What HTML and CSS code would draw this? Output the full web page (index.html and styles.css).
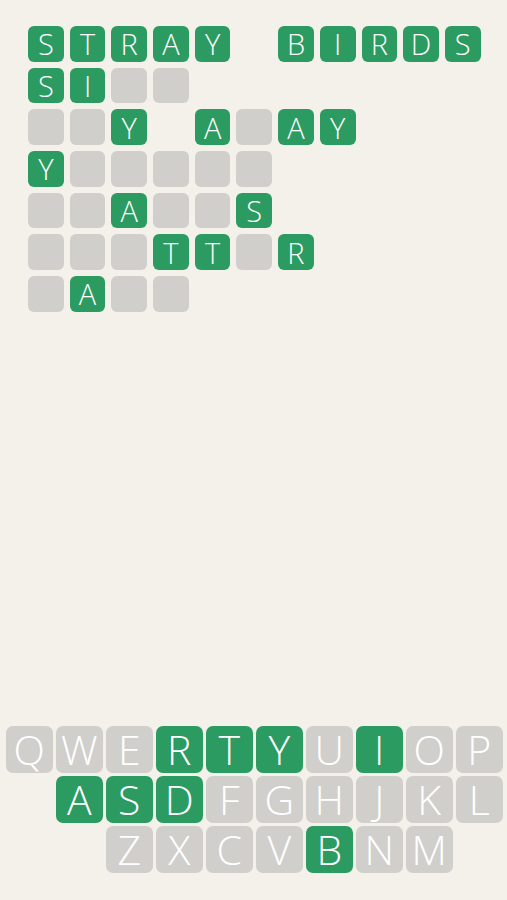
FILE: index.html
```html
<!DOCTYPE html>
<html>
<head>
<meta charset="utf-8">
<link rel="stylesheet" href="styles.css">
</head>
<body>
<div class="page">
  <div class="board">
    <div class="t g">S</div><div class="t g">T</div><div class="t g">R</div><div class="t g">A</div><div class="t g">Y</div><div class="t e"></div><div class="t g">B</div><div class="t g">I</div><div class="t g">R</div><div class="t g">D</div><div class="t g">S</div>

    <div class="t g">S</div><div class="t g">I</div><div class="t x"></div><div class="t x"></div><div class="t e"></div><div class="t e"></div><div class="t e"></div><div class="t e"></div><div class="t e"></div><div class="t e"></div><div class="t e"></div>

    <div class="t x"></div><div class="t x"></div><div class="t g">Y</div><div class="t e"></div><div class="t g">A</div><div class="t x"></div><div class="t g">A</div><div class="t g">Y</div><div class="t e"></div><div class="t e"></div><div class="t e"></div>

    <div class="t g">Y</div><div class="t x"></div><div class="t x"></div><div class="t x"></div><div class="t x"></div><div class="t x"></div><div class="t e"></div><div class="t e"></div><div class="t e"></div><div class="t e"></div><div class="t e"></div>

    <div class="t x"></div><div class="t x"></div><div class="t g">A</div><div class="t x"></div><div class="t x"></div><div class="t g">S</div><div class="t e"></div><div class="t e"></div><div class="t e"></div><div class="t e"></div><div class="t e"></div>

    <div class="t x"></div><div class="t x"></div><div class="t x"></div><div class="t g">T</div><div class="t g">T</div><div class="t x"></div><div class="t g">R</div><div class="t e"></div><div class="t e"></div><div class="t e"></div><div class="t e"></div>

    <div class="t x"></div><div class="t g">A</div><div class="t x"></div><div class="t x"></div>
  </div>

  <div class="keyboard">
    <div class="k">Q</div><div class="k">W</div><div class="k">E</div><div class="k on">R</div><div class="k on">T</div><div class="k on">Y</div><div class="k">U</div><div class="k on">I</div><div class="k">O</div><div class="k">P</div>
    <div class="k gap"></div><div class="k on">A</div><div class="k on">S</div><div class="k on">D</div><div class="k">F</div><div class="k">G</div><div class="k">H</div><div class="k">J</div><div class="k">K</div><div class="k">L</div>
    <div class="k gap"></div><div class="k gap"></div><div class="k">Z</div><div class="k">X</div><div class="k">C</div><div class="k">V</div><div class="k on">B</div><div class="k">N</div><div class="k">M</div>
  </div>
</div>
</body>
</html>
```

FILE: styles.css
```css
html, body {
  margin: 0;
  padding: 0;
  background: #f4f0ea;
}
.page {
  height: 900px;
  display: flex;
  flex-direction: column;
  justify-content: space-between;
  font-family: "Open Sans", "Noto Sans", sans-serif;
}
.board {
  padding: 26px 0 0 28px;
  display: grid;
  grid-template-columns: repeat(11, 35.7px);
  grid-auto-rows: 35.7px;
  column-gap: 6px;
  row-gap: 6px;
}
.t {
  border-radius: 6px;
  display: flex;
  align-items: center;
  justify-content: center;
  color: #ffffff;
  font-size: 29px;
  font-weight: 350;
  line-height: 1;
}
.t.g { background: #2b9b62; }
.t.x { background: #d0cfcc; }
.t.e { background: transparent; }
.keyboard {
  padding: 0 0 27px 6px;
  display: grid;
  grid-template-columns: repeat(10, 46.5px);
  grid-auto-rows: 46.7px;
  column-gap: 3.5px;
  row-gap: 3.4px;
}
.k {
  border-radius: 7px;
  background: #d0cfcc;
  color: #ffffff;
  display: flex;
  align-items: center;
  justify-content: center;
  font-size: 41px;
  font-weight: 300;
  line-height: 1;
}
.k.on { background: #2b9b62; }
.k.gap { background: transparent; }
```
